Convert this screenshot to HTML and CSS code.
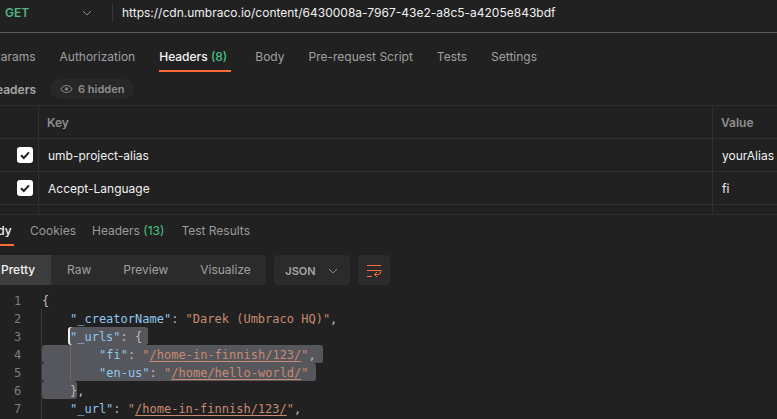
FILE: index.html
```html
<!DOCTYPE html>
<html lang="en">
<head>
<meta charset="utf-8">
<title>Request</title>
<link rel="stylesheet" href="styles.css">
</head>
<body>
<div class="urlbar">
  <span class="method">GET</span>
  <svg class="chev method-chev" width="12" height="12" viewBox="0 0 12 12"><path d="M2 4l4 4 4-4" fill="none" stroke="#8a8a8a" stroke-width="1"/></svg>
  <span class="urlsep"></span>
  <span class="url">https://cdn.umbraco.io/content/6430008a-7967-43e2-a8c5-a4205e843bdf</span>
</div>
<nav class="reqtabs">
  <span class="tab">Params</span>
  <span class="tab">Authorization</span>
  <span class="tab active">Headers <em>(8)</em></span>
  <span class="tab">Body</span>
  <span class="tab">Pre-request Script</span>
  <span class="tab">Tests</span>
  <span class="tab">Settings</span>
</nav>
<div class="hdrbar">
  <span class="hdrlabel">Headers</span>
  <span class="hidden-pill">
    <svg width="13" height="14" viewBox="0 0 14 14"><path d="M1 7c1.500-2.600 3.600-3.800 6-3.800s4.500 1.200 6 3.800c-1.500 2.600-3.600 3.800-6 3.800S2.500 9.600 1 7z" fill="none" stroke="#7c7c7c" stroke-width="1.200"/><circle cx="7" cy="7" r="1.900" fill="#7c7c7c"/></svg>
    6 hidden
  </span>
</div>
<div class="table">
  <div class="cell"></div><div class="cell head">Key</div><div class="cell head">Value</div>
  <div class="cell check"><span class="box"><svg width="12" height="12" viewBox="0 0 12 12"><path d="M2 6.300l2.800 2.700L10 3.400" fill="none" stroke="#212121" stroke-width="2"/></svg></span></div><div class="cell">umb-project-alias</div><div class="cell">yourAlias</div>
  <div class="cell check"><span class="box"><svg width="12" height="12" viewBox="0 0 12 12"><path d="M2 6.300l2.800 2.700L10 3.400" fill="none" stroke="#212121" stroke-width="2"/></svg></span></div><div class="cell">Accept-Language</div><div class="cell">fi</div>
  <div class="cell short"></div><div class="cell short"></div><div class="cell short"></div>
</div>
<nav class="restabs">
  <span class="tab active rbody">Body</span>
  <span class="tab">Cookies</span>
  <span class="tab reshdr">Headers <em>(13)</em></span>
  <span class="tab">Test Results</span>
</nav>
<div class="toolbar">
  <div class="segs">
    <span class="seg on">Pretty</span>
    <span class="seg">Raw</span>
    <span class="seg">Preview</span>
    <span class="seg">Visualize</span>
  </div>
  <div class="json">JSON <svg class="chev" width="12" height="12" viewBox="0 0 12 12"><path d="M2 4l4 4 4-4" fill="none" stroke="#8a8a8a" stroke-width="1"/></svg></div>
  <div class="wrap"><svg width="16" height="17" viewBox="0 0 16 17"><path d="M1 3.500h14M1 8.500h14M1 14.500h5M15 8.500v.7a3.300 3.300 0 0 1-3.300 3.300H8.500M11 10l-2.500 2.500L11 15" fill="none" stroke="#ff6c37" stroke-width="1"/></svg></div>
</div>
<div class="code">
  <span class="guide g1"></span>
  <span class="guide g2"></span>
  <div class="line"><span class="num">1</span><span class="src"><i class="p">{</i></span></div>
  <div class="line"><span class="num">2</span><span class="src in1"><i class="k">"_creatorName"</i><i class="p">: </i><i class="s">"Darek (Umbraco HQ)"</i><i class="p">,</i></span></div>
  <div class="line"><span class="num">3</span><span class="src in1"><span class="sel caret"><i class="k">"_urls"</i><i class="p">: {</i></span></span></div>
  <div class="line"><span class="num">4</span><span class="src"><span class="sel in2"><i class="k">"fi"</i><i class="p">: </i><i class="s">"<u>/home-in-finnish/123/</u>"</i><i class="p">,</i></span></span></div>
  <div class="line"><span class="num">5</span><span class="src"><span class="sel in2"><i class="k">"en-us"</i><i class="p">: </i><i class="s">"<u>/home/hello-world/</u>"</i></span></span></div>
  <div class="line"><span class="num">6</span><span class="src"><span class="sel in1b"><i class="p">}</i></span><i class="p">,</i></span></div>
  <div class="line"><span class="num">7</span><span class="src in1"><i class="k">"_url"</i><i class="p">: </i><i class="s">"<u>/home-in-finnish/123/</u>"</i><i class="p">,</i></span></div>
</div>
</body>
</html>
```

FILE: styles.css
```css
* { box-sizing: border-box; }
html, body { margin: 0; height: 100%; overflow: hidden; }
body {
  background: #212121;
  color: #f2f2f2;
  font-family: Inter, "Liberation Sans", sans-serif;
  font-size: 12px;
  width: 777px;
  height: 419px;
}
.urlbar {
  height: 33px;
  display: flex;
  align-items: center;
  border-bottom: 1px solid #5a5a5a;
  padding-bottom: 7px;
}
.method { margin-left: 5px; width: 76px; color: #4fb584; font-weight: 600; font-size: 12px; }
.method-chev { margin-right: 21px; }
.urlsep { width: 1px; height: 18px; background: #383838; margin-right: 9px; margin-left: -2px; }
.url { font-size: 12px; font-weight: 400; color: #f0f0f0; white-space: nowrap; }
.reqtabs {
  display: flex;
  height: 39px;
  gap: 24px;
  margin-left: -7px;
  white-space: nowrap;
}
.tab { color: #a0a0a0; font-size: 12px; font-weight: 400; padding-top: 16px; height: 100%; }
.tab em { font-style: normal; color: #49c584; }
.reqtabs .active { color: #f4f4f4; border-bottom: 2px solid #ff6c37; font-weight: 500; padding-right: 4px; }
.hdrbar {
  height: 34px;
  display: flex;
  align-items: center;
  margin-left: -13px;
  gap: 8px;
  border-bottom: 1px solid #303030;
}
.hdrlabel { color: #a6a6a6; font-weight: 600; font-size: 12px; width: 55px; padding-top: 1px; }
.hidden-pill {
  display: inline-flex;
  align-items: center;
  gap: 5px;
  height: 20px;
  padding: 0 10px;
  border-radius: 10px;
  background: #272727;
  color: #8f8f8f;
  font-weight: 600;
  font-size: 11px;
}
.table {
  display: grid;
  grid-template-columns: 38px 674px 1fr;
  grid-template-rows: 33px 33px 33px 9px;
  border-bottom: 1px solid #303030;
}
.cell {
  border-left: 1px solid #303030;
  border-bottom: 1px solid #303030;
  padding-left: 9px;
  display: flex;
  align-items: center;
  font-size: 12px;
  color: #f0f0f0;
}
.cell:nth-child(3n+1) { border-left: 0; }
.cell.head { color: #8f8f8f; font-weight: 600; padding-left: 8px; }
.cell.short { border-bottom: 0; }
.cell.check { padding-left: 17px; }
.box {
  width: 16px;
  height: 16px;
  border-radius: 3px;
  background: #fff;
  display: flex;
  align-items: center;
  justify-content: center;
}
.restabs {
  display: flex;
  height: 31px;
  gap: 16px;
  margin-left: -18px;
  white-space: nowrap;
}
.restabs .tab { padding-top: 8px; color: #9a9a9a; }
.restabs .rbody { color: #f4f4f4; border-bottom: 2px solid #ff6c37; font-weight: 500; width: 32px; }
.restabs .reshdr { padding-right: 1px; }
.toolbar {
  display: flex;
  align-items: stretch;
  height: 30px;
  margin-top: 9px;
  margin-left: -15px;
  gap: 8px;
}
.segs {
  display: flex;
  width: 281px;
  background: #2b2b2b;
  border-radius: 4px;
  overflow: hidden;
}
.seg { display: flex; align-items: center; color: #a0a0a0; padding: 0 16px 1px; font-size: 12px; }
.seg.on { width: 66px; background: #3d3d3d; color: #f4f4f4; font-weight: 500; }
.json {
  width: 76px;
  background: #2b2b2b;
  border-radius: 4px;
  display: flex;
  align-items: center;
  justify-content: center;
  gap: 11px;
  padding-top: 1px;
  color: #a6a6a6;
  font-weight: 600;
  font-size: 11px;
}
.wrap {
  width: 32px;
  background: #2b2b2b;
  border-radius: 4px;
  display: flex;
  align-items: center;
  justify-content: center;
}
.code {
  position: relative;
  margin-top: 6px;
  font-family: "DejaVu Sans Mono", "Liberation Mono", monospace;
  font-size: 12px;
  line-height: 20px;
}
.line { display: flex; height: 18px; white-space: pre; }
.num { width: 42px; padding-left: 14px; color: #7d7d7d; }
.src i { font-style: normal; }
.src u { text-decoration: underline; text-underline-offset: 2px; }
.in1 { padding-left: 28px; }
.k { color: #8fc8f0; }
.p { color: #bdbdbd; }
.s { color: #c98a70; }
.sel {
  display: inline-block;
  height: 18px;
  background: #56575c;
  border-radius: 3px;
}
.sel.in2 { padding-left: 57px; padding-right: 7px; }
.sel.in1b { padding-left: 28px; padding-right: 0; }
.caret { box-shadow: -2px 0 0 #f0f0f0; padding-right: 6px; }
.guide { position: absolute; width: 1px; background: #3a3a3a; z-index: 1; }
.g1 { left: 41px; top: 18px; height: 110px; }
.g2 { left: 70px; top: 54px; height: 36px; background: #6a6a6a; }
```
